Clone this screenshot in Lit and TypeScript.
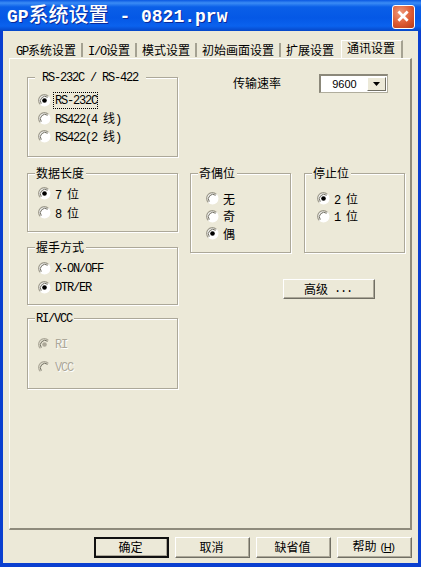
import { LitElement, html, svg, css } from "lit";
import { customElement } from "lit/decorators.js";

// SimSun-like runs: half-width Latin at 6px per cell, CJK at 12px per cell.
const runs = (s: string) =>
  (s.match(/[\x20-\x7e]+|[^\x20-\x7e]+/g) ?? []).map((r) =>
    /^[\x20-\x7e]/.test(r) ? html`<span class="lat">${r}</span>` : html`<span class="cjk">${r}</span>`
  );

const radio = (on: boolean, disabled = false) => html`<svg class="rd" viewBox="0 0 13 13" width="13" height="13">
  <circle cx="6.5" cy="6.5" r="6" fill=${disabled ? "#ece9d8" : "#fff"} stroke="none"></circle>
  <path d="M10.4 2.3A5.5 5.5 0 0 0 2.3 10.4" fill="none" stroke=${disabled ? "#aca899" : "#9d9a8b"} stroke-width="1.2"></path>
  <path d="M9.6 3.3A4.5 4.5 0 0 0 3.3 9.6" fill="none" stroke="#6f6d60" stroke-width="1"></path>
  ${on ? svg`<circle cx="6.5" cy="6.5" r="2.3" fill=${disabled ? "#aca899" : "#000"}></circle>` : ""}
</svg>`;

@customElement("app-root")
export class AppRoot extends LitElement {
  static styles = css`
    :host { display: block; width: 421px; height: 567px; font-size: 12px; color: #000; overflow: hidden; }
    * { box-sizing: border-box; }
    .lat { font-family: "Liberation Mono", monospace; font-size: 12px; letter-spacing: -1.2px; white-space: pre; }
    .cjk { font-family: "Noto Sans CJK SC", sans-serif; font-size: 12px; }
    .win { width: 421px; height: 567px; background: #0a3fd0; display: flex; flex-direction: column; padding: 0 3px 4px; }
    .title {
      height: 31px; margin: 0 -3px; padding: 0 6px 0 7px; display: flex; align-items: center; justify-content: space-between;
      background: linear-gradient(180deg, #0a58e2 0, #3b8cf5 3px, #0a5fe8 7px, #0558e6 18px, #0a62ee 26px, #0647c8 31px);
    }
    .title-text { color: #fff; font-weight: bold; white-space: nowrap; text-shadow: 1px 1px 0 #0a2a9a; line-height: 24px; }
    .title-text .lat { font-size: 18px; letter-spacing: 0; }
    .title-text .cjk { font-size: 20px; font-weight: 500; }
    .close {
      width: 23px; height: 24px; border: 1px solid #fff; border-radius: 3px; display: block; margin-top: 2px;
      background: radial-gradient(circle at 35% 30%, #ee9a7c, #dd5a32 55%, #b53a18);
    }
    .body { flex: 1; background: #ece9d8; display: flex; flex-direction: column; padding: 8px 6px 5px 6px; }
    .tabs { display: flex; height: 20px; padding-left: 2px; }
    .tab { padding: 0 5px; white-space: nowrap; line-height: 14px; border-right: 2px solid #a5a292; margin-top: 4px; height: 14px; }
    .tab.plain { border-right: none; }
    .tab.active { height: 19px; margin: 1px 0 0 2px; padding: 0 0 0 5px; width: 62px; border-right: 2px solid #a5a292; background: #ece9d8; border-top: 1px solid #fff; border-left: 1px solid #fff; }
    .panel {
      height: 472px; margin-top: -1px; border: 1px solid #fff; border-right: 2px solid #8e8b7c; border-bottom: 2px solid #8e8b7c;
      display: flex; padding: 18px 0 0 17px; gap: 12px;
    }
    .col { display: flex; flex-direction: column; }
    .left { width: 151px; }
    .right { width: 215px; }
    .group { position: relative; width: 100%; border: 1px solid #aca899; box-shadow: 1px 1px 0 #fff, inset 1px 1px 0 #fff; flex: none; }
    .group > .legend { position: absolute; left: 7px; top: -8px; padding: 0 2px 0 1px; background: #ece9d8; line-height: 14px; white-space: nowrap; }
    .rs { height: 80px; padding-top: 13px; }
    .len { height: 59px; margin-top: 16px; padding-top: 10px; }
    .hand { height: 58px; margin-top: 15px; padding-top: 11px; }
    .ri { height: 71px; margin-top: 13px; padding-top: 14px; }
    .row { display: flex; align-items: center; gap: 4px; height: 18px; padding-left: 10px; white-space: nowrap; }
    .len .row, .hand .row { height: 19px; }
    .rd { flex: none; }
    .focus { outline: 1px dotted #000; outline-offset: 0; line-height: 14px; padding: 0 0 0 1px; display: block; margin-left: -1px; }
    .ri .row { height: 23px; color: #aca899; text-shadow: 1px 1px 0 #fff; }
    .speed { display: flex; align-items: center; height: 20px; margin-top: -4px; }
    .speed-label { margin-left: 43px; width: 86px; }
    .combo { width: 69px; height: 19px; display: flex; background: #fff; border: 1px solid #b0ad9d; border-top: 2px solid #8b887a; border-left: 2px solid #8b887a; padding: 1px; }
    .combo-v { flex: 1; text-align: center; line-height: 14px; }
    .combo-v .lat { font-family: "Liberation Sans", sans-serif; font-size: 11px; letter-spacing: 0; }
    .combo-b { width: 19px; background: #ece9d8; border: 1px solid; border-color: #fff #716f64 #716f64 #fff; display: flex; align-items: center; justify-content: center; }
    .tri { display: block; }
    .groups { display: flex; gap: 13px; margin-top: 80px; }
    .narrow { width: 101px; height: 80px; padding-top: 16px; }
    .narrow .row { height: 17.5px; padding-left: 15px; gap: 4px; }
    .narrow.stop .row { padding-left: 12px; }
    .adv-row { display: flex; margin: 26px 0 0 93px; }
    .btn {
      width: 92px; height: 20px; background: #ece9d8; border: 1px solid; border-color: #fff #716f64 #716f64 #fff; padding: 0 2px 1px 0;
      box-shadow: inset -1px -1px 0 #aca899; display: flex; align-items: center; justify-content: center; white-space: pre; line-height: 14px;
    }
    .footer { display: flex; justify-content: flex-end; gap: 6px; margin-top: 7px; }
    .footer .btn { width: 75px; height: 21px; padding: 0 2px 2px 0; }
    .btn.def { border: 2px solid #111; box-shadow: inset -1px -1px 0 #aca899; }
    .hotkey { font-family: "Liberation Sans", sans-serif; font-size: 11px; letter-spacing: -0.4px; margin-left: 4px; }
    .hotkey u { text-decoration: underline; }
  `;

  render() {
    return html`<div class="win">
      <div class="title">
        <div class="title-text">${runs("GP系统设置 - 0821.prw")}</div>
        <svg class="close" viewBox="0 0 23 24" width="23" height="24">
          <path d="M7 7L15 15M15 7L7 15" stroke="#fff" stroke-width="3" stroke-linecap="square"></path>
        </svg>
      </div>
      <div class="body">
        <div class="tabs">
          ${["GP系统设置", "I/O设置", "模式设置", "初始画面设置", "扩展设置"].map(
            (t, i) => html`<div class=${i === 4 ? "tab plain" : "tab"}>${runs(t)}</div>`
          )}
          <div class="tab active">${runs("通讯设置")}</div>
        </div>
        <div class="panel">
          <div class="col left">
            <div class="group rs">
              <span class="legend">${runs(" RS-232C / RS-422 ")}</span>
              <div class="row">${radio(true)}<span class="focus">${runs("RS-232C")}</span></div>
              <div class="row">${radio(false)}<span>${runs("RS422(4 线)")}</span></div>
              <div class="row">${radio(false)}<span>${runs("RS422(2 线)")}</span></div>
            </div>
            <div class="group len">
              <span class="legend">${runs("数据长度")}</span>
              <div class="row">${radio(true)}<span>${runs("7 位")}</span></div>
              <div class="row">${radio(false)}<span>${runs("8 位")}</span></div>
            </div>
            <div class="group hand">
              <span class="legend">${runs("握手方式")}</span>
              <div class="row">${radio(false)}<span>${runs("X-ON/OFF")}</span></div>
              <div class="row">${radio(true)}<span>${runs("DTR/ER")}</span></div>
            </div>
            <div class="group ri">
              <span class="legend">${runs("RI/VCC")}</span>
              <div class="row">${radio(true, true)}<span>${runs("RI")}</span></div>
              <div class="row">${radio(false, true)}<span>${runs("VCC")}</span></div>
            </div>
          </div>
          <div class="col right">
            <div class="speed">
              <span class="speed-label">${runs("传输速率")}</span>
              <div class="combo">
                <span class="combo-v">${runs("9600")}</span>
                <span class="combo-b"><svg class="tri" viewBox="0 0 7 4" width="7" height="4"><path d="M0 0H7L3.5 4Z" fill="#000"></path></svg></span>
              </div>
            </div>
            <div class="groups">
              <div class="group narrow">
                <span class="legend">${runs("奇偶位")}</span>
                <div class="row">${radio(false)}<span>${runs("无")}</span></div>
                <div class="row">${radio(false)}<span>${runs("奇")}</span></div>
                <div class="row">${radio(true)}<span>${runs("偶")}</span></div>
              </div>
              <div class="group narrow stop">
                <span class="legend">${runs("停止位")}</span>
                <div class="row">${radio(true)}<span>${runs("2 位")}</span></div>
                <div class="row">${radio(false)}<span>${runs("1 位")}</span></div>
              </div>
            </div>
            <div class="adv-row"><div class="btn">${runs("高级 ...")}</div></div>
          </div>
        </div>
        <div class="footer">
          <div class="btn def">${runs("确定")}</div>
          <div class="btn">${runs("取消")}</div>
          <div class="btn">${runs("缺省值")}</div>
          <div class="btn"><span>${runs("帮助")}<span class="hotkey">(<u>H</u>)</span></span></div>
        </div>
      </div>
    </div>`;
  }
}
